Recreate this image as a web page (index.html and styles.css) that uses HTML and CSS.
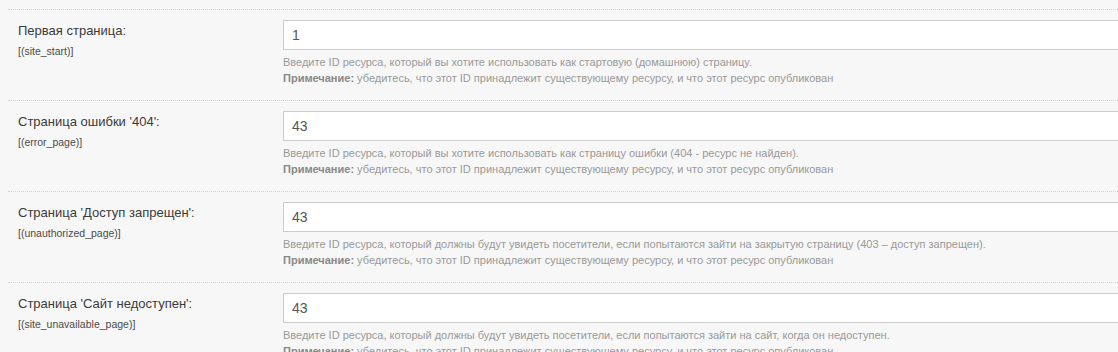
FILE: index.html
```html
<!DOCTYPE html>
<html lang="ru">
<head>
    <meta charset="UTF-8">
    <meta name="viewport" content="width=device-width, initial-scale=1.0">
    <title>Настройки сайта</title>
    <link rel="stylesheet" href="styles.css">
</head>
<body>
    <div class="settings">
        <div class="row">
            <div class="label">
                <div class="name">Первая страница:</div>
                <div class="key">[(site_start)]</div>
            </div>
            <div class="field">
                <input type="text" class="ipt" value="1">
                <div class="desc">
                    Введите ID ресурса, который вы хотите использовать как стартовую (домашнюю) страницу.<br>
                    <b>Примечание:</b> убедитесь, что этот ID принадлежит существующему ресурсу, и что этот ресурс опубликован
                </div>
            </div>
        </div>
        <div class="row">
            <div class="label">
                <div class="name">Страница ошибки '404':</div>
                <div class="key">[(error_page)]</div>
            </div>
            <div class="field">
                <input type="text" class="ipt" value="43">
                <div class="desc">
                    Введите ID ресурса, который вы хотите использовать как страницу ошибки (404 - ресурс не найден).<br>
                    <b>Примечание:</b> убедитесь, что этот ID принадлежит существующему ресурсу, и что этот ресурс опубликован
                </div>
            </div>
        </div>
        <div class="row">
            <div class="label">
                <div class="name">Страница 'Доступ запрещен':</div>
                <div class="key">[(unauthorized_page)]</div>
            </div>
            <div class="field">
                <input type="text" class="ipt" value="43">
                <div class="desc">
                    Введите ID ресурса, который должны будут увидеть посетители, если попытаются зайти на закрытую страницу (403 – доступ запрещен).<br>
                    <b>Примечание:</b> убедитесь, что этот ID принадлежит существующему ресурсу, и что этот ресурс опубликован
                </div>
            </div>
        </div>
        <div class="row">
            <div class="label">
                <div class="name">Страница 'Сайт недоступен':</div>
                <div class="key">[(site_unavailable_page)]</div>
            </div>
            <div class="field">
                <input type="text" class="ipt" value="43">
                <div class="desc">
                    Введите ID ресурса, который должны будут увидеть посетители, если попытаются зайти на сайт, когда он недоступен.<br>
                    <b>Примечание:</b> убедитесь, что этот ID принадлежит существующему ресурсу, и что этот ресурс опубликован
                </div>
            </div>
        </div>
    </div>
</body>
</html>
```

FILE: styles.css
```css
* {
    padding: 0px;
    margin: 0px;
    box-sizing: border-box;
}

body {
    background-color: #f7f7f7;
    font-family: "Liberation Sans", Arial, sans-serif;
    color: #333;
    overflow: hidden;
}

.settings {
    padding: 9px 0px 0px 8px;
}

.row {
    display: flex;
    border-top: 1px dotted #d4d4d4;
    padding: 10px 0px 14px 0px;
    height: 91px;
}

.label {
    width: 275px;
    flex-shrink: 0;
    padding-left: 10px;
}

.label .name {
    font-size: 13px;
    line-height: 18px;
    margin-top: 2px;
    color: #3a3a3a;
}

.label .key {
    font-size: 10.5px;
    line-height: 14px;
    margin-top: 4px;
    color: #4a4a4a;
}

.field {
    flex: 1;
}

.ipt {
    display: block;
    width: 880px;
    height: 30px;
    border: 1px solid #ccc;
    background-color: #fff;
    padding-left: 8px;
    font-family: "Liberation Sans", Arial, sans-serif;
    font-size: 14px;
    color: #555;
    outline: none;
}

.desc {
    margin-top: 4px;
    font-size: 11px;
    line-height: 16px;
    color: #999;
}

.desc b {
    color: #888;
}
```
